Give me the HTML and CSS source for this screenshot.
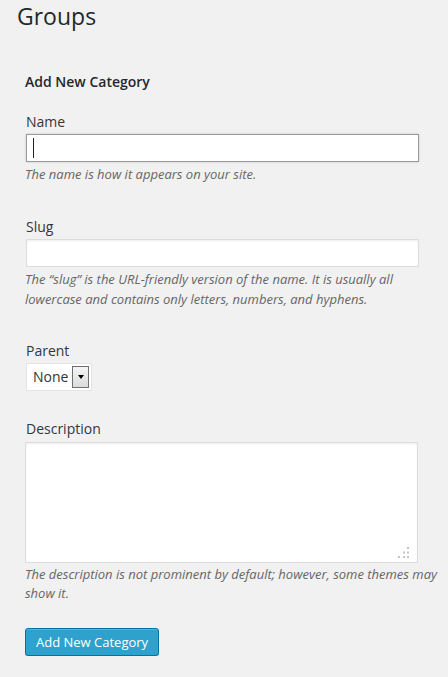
FILE: index.html
```html
<!DOCTYPE html>
<html lang="en">
<head>
<meta charset="utf-8">
<title>Groups</title>
<link rel="stylesheet" href="styles.css">
</head>
<body>
<div class="wrap">
  <h1 class="page-title">Groups</h1>
  <form class="form-wrap" onsubmit="return false;">
    <h2 class="form-title">Add New Category</h2>

    <div class="form-field">
      <label class="field-label" for="tag-name">Name</label>
      <div class="input-holder">
        <input class="text-input is-active" id="tag-name" type="text" value="">
        <span class="caret"></span>
      </div>
      <p class="description">The name is how it appears on your site.</p>
    </div>

    <div class="form-field field-slug">
      <label class="field-label" for="tag-slug">Slug</label>
      <input class="text-input" id="tag-slug" type="text" value="">
      <p class="description">The “slug” is the URL-friendly version of the name. It is usually all lowercase and contains only letters, numbers, and hyphens.</p>
    </div>

    <div class="form-field field-parent">
      <label class="field-label">Parent</label>
      <div class="select-box">
        <span class="select-value">None</span>
        <span class="select-button"><span class="select-arrow"></span></span>
      </div>
    </div>

    <div class="form-field field-description">
      <label class="field-label" for="tag-description">Description</label>
      <div class="textarea-holder">
        <textarea class="text-area" id="tag-description"></textarea>
        <svg class="grip" width="11" height="11" viewBox="0 0 11 11" aria-hidden="true">
          <rect x="9" y="0" width="2" height="2" fill="#c4c4c4"/>
          <rect x="5" y="4.5" width="2" height="2" fill="#c4c4c4"/>
          <rect x="9" y="4.5" width="2" height="2" fill="#c4c4c4"/>
          <rect x="0" y="9" width="2" height="2" fill="#c4c4c4"/>
          <rect x="5" y="9" width="2" height="2" fill="#c4c4c4"/>
          <rect x="9" y="9" width="2" height="2" fill="#c4c4c4"/>
        </svg>
      </div>
      <p class="description">The description is not prominent by default; however, some themes may show it.</p>
    </div>

    <div class="submit-row">
      <button class="button-primary" type="button">Add New Category</button>
    </div>
  </form>
</div>
</body>
</html>
```

FILE: styles.css
```css
html, body {
  margin: 0;
  padding: 0;
  background: #f1f1f1;
}

body {
  font-family: "Open Sans", "Noto Sans", sans-serif;
  color: #444;
  font-size: 13px;
}

.wrap {
  padding: 2px 8px 0 17px;
}

.page-title {
  margin: 0;
  font-size: 23px;
  font-weight: 400;
  line-height: 29px;
  color: #23282d;
}

.form-wrap {
  margin: 41px 0 0 8px;
}

.form-title {
  margin: 0;
  font-size: 14px;
  font-weight: 600;
  line-height: 20px;
  color: #23282d;
}

.form-field {
  margin-top: 32px;
}

.form-title + .form-field {
  margin-top: 20px;
}

.form-field.field-slug {
  margin-top: 32.5px;
}

.form-field.field-parent {
  margin-top: 31.5px;
}

.form-field.field-description {
  margin-top: 28px;
}

.field-label {
  display: block;
  font-size: 14px;
  line-height: 20px;
  color: #32373c;
  padding-left: 1px;
}

.input-holder {
  position: relative;
  width: 393px;
  margin: 2px 0 0 1px;
}

.text-input {
  display: block;
  box-sizing: border-box;
  width: 393px;
  height: 28px;
  margin: 2px 0 0 1px;
  padding: 3px 5px;
  border: 1px solid #ddd;
  background: #fff;
  box-shadow: inset 0 1px 2px rgba(0, 0, 0, 0.07);
  font-family: inherit;
  font-size: 14px;
  color: #333;
  outline: none;
}

.input-holder .text-input {
  margin: 0;
}

.text-input.is-active {
  border-color: #9a9a9a;
  box-shadow: 0 0 2px rgba(0, 0, 0, 0.18);
}

.caret {
  position: absolute;
  left: 7px;
  top: 4px;
  width: 1px;
  height: 20px;
  background: #222;
}

.description {
  margin: 3px 0 0 0;
  font-size: 13px;
  font-style: italic;
  line-height: 19.5px;
  color: #666;
}

.field-description .description {
  margin-top: 2px;
}

.select-box {
  display: flex;
  align-items: center;
  box-sizing: border-box;
  width: 66px;
  height: 28px;
  margin: 2px 0 0 1px;
  border: 1px solid #e4e4e4;
  background: #fff;
  padding: 0 2px 0 6px;
}

.select-value {
  flex: 1;
  font-size: 14px;
  line-height: 26px;
  color: #333;
}

.select-button {
  display: flex;
  align-items: center;
  justify-content: center;
  box-sizing: border-box;
  width: 17px;
  height: 22px;
  border: 1px solid #707070;
  background: linear-gradient(#f4f4f4, #dcdcdc);
}

.select-arrow {
  width: 0;
  height: 0;
  border-left: 3.5px solid transparent;
  border-right: 3.5px solid transparent;
  border-top: 4px solid #000;
}

.textarea-holder {
  position: relative;
  width: 393px;
  margin-top: 3px;
}

.text-area {
  display: block;
  box-sizing: border-box;
  width: 393px;
  height: 121px;
  margin: 0;
  padding: 4px 6px;
  border: 1px solid #ddd;
  background: #fff;
  box-shadow: inset 0 1px 2px rgba(0, 0, 0, 0.07);
  resize: none;
  font-family: inherit;
  font-size: 14px;
  outline: none;
}

.grip {
  position: absolute;
  right: 9px;
  bottom: 5px;
}

.submit-row {
  margin-top: 24px;
}

.button-primary {
  display: inline-block;
  box-sizing: border-box;
  height: 28px;
  margin: 0;
  padding: 0 10px 1px;
  border: 1px solid #0074a2;
  border-radius: 3px;
  background: #2ea2cc;
  box-shadow: inset 0 1px 0 rgba(120, 200, 230, 0.5), 0 1px 0 rgba(0, 0, 0, 0.15);
  color: #fff;
  font-family: inherit;
  font-size: 13px;
  line-height: 26px;
  cursor: pointer;
}
```
